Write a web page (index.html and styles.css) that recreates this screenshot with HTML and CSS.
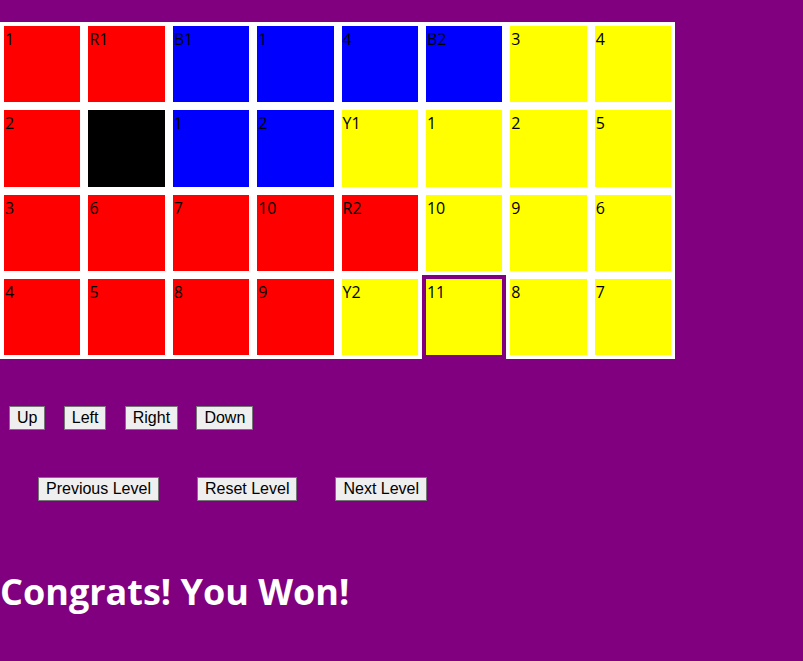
FILE: index.html
```html
<!DOCTYPE html>
<html>
<head>
<meta charset="utf-8">
<link rel="stylesheet" href="styles.css">
</head>
<body>
<div class="board">
  <div class="cell red">1</div>
  <div class="cell red">R1</div>
  <div class="cell blue">B1</div>
  <div class="cell blue">1</div>
  <div class="cell blue">4</div>
  <div class="cell blue">B2</div>
  <div class="cell yellow">3</div>
  <div class="cell yellow">4</div>

  <div class="cell red">2</div>
  <div class="cell black"></div>
  <div class="cell blue">1</div>
  <div class="cell blue">2</div>
  <div class="cell yellow">Y1</div>
  <div class="cell yellow">1</div>
  <div class="cell yellow">2</div>
  <div class="cell yellow">5</div>

  <div class="cell red">3</div>
  <div class="cell red">6</div>
  <div class="cell red">7</div>
  <div class="cell red">10</div>
  <div class="cell red">R2</div>
  <div class="cell yellow">10</div>
  <div class="cell yellow">9</div>
  <div class="cell yellow">6</div>

  <div class="cell red">4</div>
  <div class="cell red">5</div>
  <div class="cell red">8</div>
  <div class="cell red">9</div>
  <div class="cell yellow">Y2</div>
  <div class="cell yellow selected">11</div>
  <div class="cell yellow">8</div>
  <div class="cell yellow">7</div>
</div>

<div class="controls">
  <button class="btn">Up</button>
  <button class="btn">Left</button>
  <button class="btn">Right</button>
  <button class="btn">Down</button>
</div>

<div class="levels">
  <button class="btn">Previous Level</button>
  <button class="btn">Reset Level</button>
  <button class="btn">Next Level</button>
</div>

<h1 class="message">Congrats! You Won!</h1>
</body>
</html>
```
FILE: styles.css
```css
html, body {
  margin: 0;
  padding: 0;
  background: #800080;
}

body {
  font-family: "Open Sans", "Noto Sans", sans-serif;
}

.board {
  margin-top: 22px;
  width: 675px;
  display: grid;
  grid-template-columns: repeat(8, 1fr);
  grid-template-rows: repeat(4, 84.333px);
  background: #ffffff;
}

.cell {
  border: 4px solid #ffffff;
  font-size: 16px;
  line-height: 22px;
  padding-top: 2px;
  padding-left: 1px;
  color: #000000;
  overflow: hidden;
}

.red { background: #ff0000; }
.blue { background: #0000ff; }
.yellow { background: #ffff00; }
.black { background: #000000; }

.selected {
  border-color: #800080;
}

.controls {
  display: flex;
  gap: 18.3px;
  margin-top: 47px;
  padding-left: 9px;
}

.levels {
  display: flex;
  gap: 38px;
  margin-top: 47px;
  padding-left: 38px;
}

.btn {
  font-family: "Liberation Sans", Arial, sans-serif;
  font-size: 16px;
  line-height: normal;
  color: #000000;
  background: #efefef;
  border: 1px solid #767676;
  border-radius: 0;
  padding: 2px 7px;
  margin: 0;
}

.message {
  margin: 66px 0 0 0;
  font-family: "Open Sans", "Noto Sans", sans-serif;
  font-weight: 700;
  font-size: 36px;
  line-height: normal;
  color: #ffffff;
}
```
